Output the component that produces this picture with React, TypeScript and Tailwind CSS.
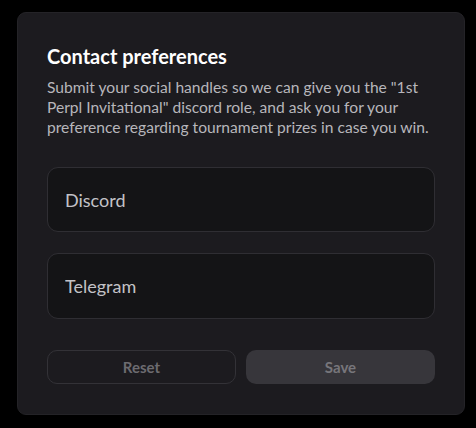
import React from "react";

export default function App() {
  return (
    <div
      className="w-[476px] h-[428px] bg-black pt-[12px] pl-[17px]"
      style={{ fontFamily: 'Lato, "Noto Sans", sans-serif' }}
    >
      <div className="w-[448px] h-[403px] rounded-[9px] bg-[#1c1b1f] border border-[#242327] p-[29px] flex flex-col">
        <h1 className="text-[20px] leading-[28px] font-bold text-white">Contact preferences</h1>
        <p className="mt-[7px] text-[15.6px] leading-[20px] text-[#b7b6bb] whitespace-nowrap">
          Submit your social handles so we can give you the "1st
          <br />
          Perpl Invitational" discord role, and ask you for your
          <br />
          preference regarding tournament prizes in case you win.
        </p>
        <div className="mt-[30px] flex flex-col gap-[21px]">
          <input
            placeholder="Discord"
            className="h-[65px] w-full rounded-[11px] border border-[#2f2e33] bg-[#141416] pl-[17px] text-[18px] text-white placeholder:text-[#c3c2c7] outline-none"
          />
          <input
            placeholder="Telegram"
            className="h-[66px] w-full rounded-[11px] border border-[#2f2e33] bg-[#141416] pl-[17px] text-[18px] text-white placeholder:text-[#c3c2c7] outline-none"
          />
        </div>
        <div className="mt-[31px] grid grid-cols-2 gap-[10px]">
          <button className="h-[34px] rounded-[10px] border border-[#333237] bg-transparent text-[15px] font-bold text-[#6c6b70]">
            Reset
          </button>
          <button className="h-[34px] rounded-[10px] bg-[#37363b] text-[15px] font-bold text-[#77767b]">
            Save
          </button>
        </div>
      </div>
    </div>
  );
}
